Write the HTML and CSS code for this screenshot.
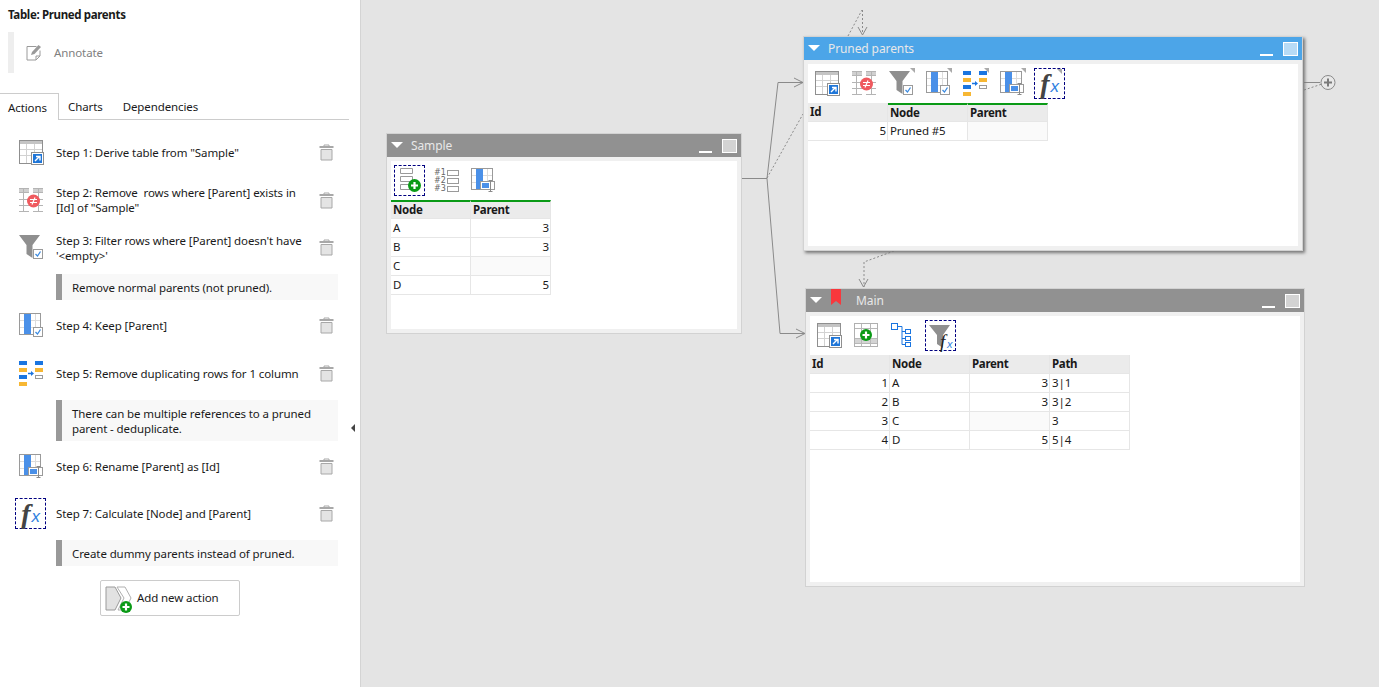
FILE: index.html
```html
<!DOCTYPE html>
<html lang="en">
<head>
    <meta charset="UTF-8">
    <title>Table: Pruned parents</title>
    <link rel="stylesheet" href="styles.css">
</head>
<body>

<svg class="defs" width="0" height="0">
    <symbol id="ic-derive" viewBox="0 0 25 25">
        <rect x="0.5" y="0.5" width="23" height="23" fill="#fff" stroke="#8f8f8f"/>
        <rect x="1" y="1" width="22" height="3" fill="#c4c4c4"/>
        <path d="M1 9.5h22M1 15.5h22M7.5 4v19M15.5 4v19" stroke="#d2d2d2"/>
        <rect x="12.5" y="12.5" width="12" height="12" fill="#fff" stroke="#8f8f8f"/>
        <rect x="14" y="14" width="9" height="9" fill="#1f76d8"/>
        <path d="M16 21l4-4M17 16.5h4v4" fill="none" stroke="#fff" stroke-width="1.4"/>
    </symbol>
    <symbol id="ic-remove" viewBox="0 0 25 25">
        <path d="M0 1h10v3.500H0zM14 1h10v3.500H14z" fill="#d0d0d0"/>
        <path d="M0 .5h10M14 .5h10M0 4.500h10M14 4.500h10M0 11.500h10M14 11.500h10M0 17.500h10M14 17.500h10M0 23.500h10M14 23.500h10M4.500 0v24M19.500 0v24" stroke="#b4b4b4" fill="none"/>
        <circle cx="14.500" cy="13" r="6.500" fill="#ef5a5f"/>
        <path d="M11 11.500h7M11 14.500h7M16 9.500l-3 7" stroke="#fff" stroke-width="1.200" fill="none"/>
    </symbol>
    <symbol id="ic-filter" viewBox="0 0 25 25">
        <path d="M0 0h21l-7.500 10v13l-6-4v-9z" fill="#8f8f8f"/>
        <rect x="14.500" y="14.500" width="9" height="9" fill="#fff" stroke="#9a9a9a"/>
        <path d="M16.500 19l2 2 3-4.500" fill="none" stroke="#3c8be0" stroke-width="1.300"/>
    </symbol>
    <symbol id="ic-keep" viewBox="0 0 25 25">
        <rect x="0.500" y="0.500" width="21" height="21" fill="#fff" stroke="#9a9a9a"/>
        <path d="M1 7.500h20M1 14.500h20M16.500 1v20" stroke="#dcdcdc"/>
        <rect x="5" y="1" width="7" height="20" fill="#4a90e8"/>
        <rect x="14.500" y="14.500" width="9" height="9" fill="#fff" stroke="#9a9a9a"/>
        <path d="M16.500 19l2 2 3-4.500" fill="none" stroke="#3c8be0" stroke-width="1.300"/>
    </symbol>
    <symbol id="ic-dedup" viewBox="0 0 25 25">
        <rect x="0" y="0" width="8" height="4" fill="#1a75e0"/>
        <rect x="0" y="7" width="8" height="4" fill="#f7b733"/>
        <rect x="0" y="14" width="8" height="4" fill="#1a75e0"/>
        <rect x="0" y="21" width="8" height="4" fill="#f7b733"/>
        <rect x="16" y="0" width="8" height="4" fill="#1a75e0"/>
        <rect x="16" y="7" width="8" height="4" fill="#f7b733"/>
        <rect x="16.500" y="14.500" width="7" height="3" fill="#fff" stroke="#9a9a9a"/>
        <path d="M9 12.500h4" stroke="#1a75e0" stroke-width="1.500"/>
        <path d="M12 10l3 2.500-3 2.500z" fill="#1a75e0"/>
    </symbol>
    <symbol id="ic-rename" viewBox="0 0 25 25">
        <rect x="0.500" y="0.500" width="21" height="21" fill="#fff" stroke="#9a9a9a"/>
        <path d="M1 7.500h20M1 14.500h20M16.500 1v20" stroke="#dcdcdc"/>
        <rect x="5" y="1" width="7" height="20" fill="#4a90e8"/>
        <rect x="9.500" y="13.500" width="14" height="8" fill="#fff" stroke="#9a9a9a"/>
        <rect x="11" y="15" width="7" height="5" fill="#4a90e8"/>
        <path d="M17.500 12.500h4M19.500 12.500v11M17.500 23.500h4" fill="none" stroke="#8a8a8a"/>
    </symbol>
    <symbol id="ic-addrow" viewBox="0 0 25 25">
        <path d="M3.500 .5h12v5h-12zM3.500 8.500h12v5h-12zM3.500 16.500h12v5h-12z" fill="#fff" stroke="#9a9a9a"/>
        <circle cx="17.500" cy="17.500" r="6.500" fill="#0a9a16"/>
        <path d="M14 17.500h7M17.500 14v7" stroke="#fff" stroke-width="2.200"/>
    </symbol>
    <symbol id="ic-tablePlus" viewBox="0 0 25 25">
        <rect x="0.500" y="0.500" width="23" height="23" fill="#fff" stroke="#b0b0b0"/>
        <rect x="1" y="16" width="22" height="4" fill="#d4d4d4"/>
        <path d="M1 5.500h22M1 15.500h22M1 20.500h22M7.500 1v22M16.500 1v22" stroke="#b8b8b8"/>
        <circle cx="12" cy="12" r="6" fill="#0a9a16"/>
        <path d="M8.500 12h7M12 8.500v7" stroke="#fff" stroke-width="2.200"/>
    </symbol>
    <symbol id="ic-tree" viewBox="0 0 25 25">
        <g fill="#fff" stroke="#1a75e0">
            <rect x="0.500" y="0.500" width="6" height="6"/>
            <rect x="14.500" y="6.500" width="5" height="4"/>
            <rect x="14.500" y="13.500" width="5" height="4"/>
            <rect x="14.500" y="19.500" width="5" height="4"/>
        </g>
        <path d="M6.500 3.500h4.500v18h3.500M11 8.500h3.500M11 15.500h3.500" fill="none" stroke="#1a75e0"/>
    </symbol>
    <symbol id="ic-trash" viewBox="0 0 15 17">
        <path d="M5 2.500v-1.500h5v1.500" fill="none" stroke="#a8a8a8"/>
        <rect x="0.500" y="2" width="14" height="2" fill="#a8a8a8"/>
        <path d="M2 5.500h11v10.500h-11z" fill="#e4e4e4" stroke="#a8a8a8"/>
    </symbol>
    <symbol id="ic-annotate" viewBox="0 0 16 17">
        <path d="M10.500 2.500h-9.500v13.500h9l4-4v-5.500" fill="none" stroke="#9a9a9a"/>
        <path d="M10 16v-4h4" fill="none" stroke="#9a9a9a"/>
        <path d="M5 11l1-3 6.500-7 2.500 2-6.500 7z" fill="#9a9a9a"/>
    </symbol>
    <symbol id="ic-addaction" viewBox="0 0 28 28">
        <path d="M1 1h9l6 11-6 12h-9z" fill="#e2e2e2" stroke="#9a9a9a"/>
        <path d="M12 1h8l6 11-6 12h-7l6-12z" fill="#fff" stroke="#b0b0b0"/>
        <circle cx="21" cy="21" r="6" fill="#0a9a16"/>
        <path d="M17.500 21h7M21 17.500v7" stroke="#fff" stroke-width="2.200"/>
    </symbol>
</svg>

<div class="app">
    <aside class="sidebar">
        <div class="sheet-title">Table: Pruned parents</div>
        <div class="annotate">
            <svg class="annotate-icon"><use href="#ic-annotate"/></svg>
            <span>Annotate</span>
        </div>

        <div class="tabs">
            <div class="tab active">Actions</div>
            <div class="tab">Charts</div>
            <div class="tab">Dependencies</div>
        </div>

        <div class="steps">
            <div class="step">
                <svg class="step-icon"><use href="#ic-derive"/></svg>
                <div class="step-text">Step 1: Derive table from "Sample"</div>
                <svg class="trash"><use href="#ic-trash"/></svg>
            </div>
            <div class="step">
                <svg class="step-icon"><use href="#ic-remove"/></svg>
                <div class="step-text">Step 2: Remove&nbsp; rows where [Parent] exists in [Id] of "Sample"</div>
                <svg class="trash"><use href="#ic-trash"/></svg>
            </div>
            <div class="step">
                <svg class="step-icon"><use href="#ic-filter"/></svg>
                <div class="step-text">Step 3: Filter rows where [Parent] doesn't have '&lt;empty&gt;'</div>
                <svg class="trash"><use href="#ic-trash"/></svg>
            </div>
            <div class="note">Remove normal parents (not pruned).</div>
            <div class="step">
                <svg class="step-icon"><use href="#ic-keep"/></svg>
                <div class="step-text">Step 4: Keep [Parent]</div>
                <svg class="trash"><use href="#ic-trash"/></svg>
            </div>
            <div class="step">
                <svg class="step-icon"><use href="#ic-dedup"/></svg>
                <div class="step-text">Step 5: Remove duplicating rows for 1 column</div>
                <svg class="trash"><use href="#ic-trash"/></svg>
            </div>
            <div class="note">There can be multiple references to a pruned parent - deduplicate.</div>
            <div class="step">
                <svg class="step-icon"><use href="#ic-rename"/></svg>
                <div class="step-text">Step 6: Rename [Parent] as [Id]</div>
                <svg class="trash"><use href="#ic-trash"/></svg>
            </div>
            <div class="step">
                <div class="fx-box step-fx"><span class="fx-f">f</span><span class="fx-x">x</span></div>
                <div class="step-text">Step 7: Calculate [Node] and [Parent]</div>
                <svg class="trash"><use href="#ic-trash"/></svg>
            </div>
            <div class="note">Create dummy parents instead of pruned.</div>
        </div>

        <div class="add-action">
            <svg class="add-action-icon"><use href="#ic-addaction"/></svg>
            <span class="add-action-label">Add new action</span>
        </div>
        <div class="collapse-handle"></div>
    </aside>

    <main class="canvas">
        <!-- connectors, in page coordinates -->
        <svg class="wires" viewBox="361 0 1018 687">
            <g fill="none" stroke="#8a8a8a">
                <path d="M741 178.500h26L778 82.500h25M767 178.500L780 333.500h25"/>
                <path d="M794 78l9 4.500-9 4.500M796 329l9 4.500-9 4.500"/>
                <path d="M1304 82.500h16"/>
            </g>
            <g fill="none" stroke="#8a8a8a" stroke-dasharray="2 2">
                <path d="M767 178L803 114"/>
                <path d="M862.500 10v24M848 36L862 10"/>
                <path d="M1304 90L1322 84"/>
                <path d="M894 251L864 262v25"/>
            </g>
            <path d="M858 27l4.500 8 4.500-8M859 279l4.500 8 4.500-8" fill="none" stroke="#8a8a8a"/>
            <circle cx="1328" cy="82.500" r="7" fill="#e8e8e8" stroke="#8a8a8a"/>
            <path d="M1324 82.500h8M1328 78.500v8" stroke="#7a7a7a" stroke-width="2"/>
        </svg>

        <section class="win win-sample">
            <div class="win-title">
                <span class="caret"></span>
                <span class="win-name">Sample</span>
                <span class="win-min"></span>
                <span class="win-max"></span>
            </div>
            <div class="win-body">
                <div class="toolbar">
                    <div class="tool dashed"><svg class="tool-icon"><use href="#ic-addrow"/></svg></div>
                    <div class="tool numbered">
                        <div class="num-row"><span>#1</span><i></i></div>
                        <div class="num-row"><span>#2</span><i></i></div>
                        <div class="num-row"><span>#3</span><i></i></div>
                    </div>
                    <div class="tool"><svg class="tool-icon"><use href="#ic-rename"/></svg></div>
                </div>
                <table class="grid">
                    <tr><th class="fresh">Node</th><th class="fresh">Parent</th></tr>
                    <tr><td>A</td><td class="num">3</td></tr>
                    <tr><td>B</td><td class="num">3</td></tr>
                    <tr><td>C</td><td class="empty"></td></tr>
                    <tr><td>D</td><td class="num">5</td></tr>
                </table>
            </div>
        </section>

        <section class="win win-pruned">
            <div class="win-title">
                <span class="caret"></span>
                <span class="win-name">Pruned parents</span>
                <span class="win-min"></span>
                <span class="win-max"></span>
            </div>
            <div class="win-body">
                <div class="toolbar">
                    <div class="tool"><svg class="tool-icon"><use href="#ic-derive"/></svg></div>
                    <div class="tool"><svg class="tool-icon"><use href="#ic-remove"/></svg></div>
                    <div class="tool marked"><svg class="tool-icon"><use href="#ic-filter"/></svg></div>
                    <div class="tool marked"><svg class="tool-icon"><use href="#ic-keep"/></svg></div>
                    <div class="tool marked"><svg class="tool-icon"><use href="#ic-dedup"/></svg></div>
                    <div class="tool marked"><svg class="tool-icon"><use href="#ic-rename"/></svg></div>
                    <div class="tool marked fx-box"><span class="fx-f">f</span><span class="fx-x">x</span></div>
                </div>
                <table class="grid">
                    <tr><th>Id</th><th class="fresh">Node</th><th class="fresh">Parent</th></tr>
                    <tr><td class="num">5</td><td>Pruned #5</td><td class="empty"></td></tr>
                </table>
            </div>
        </section>

        <section class="win win-main">
            <div class="win-title">
                <span class="caret"></span>
                <svg class="bookmark" viewBox="0 0 10 16"><path d="M0 0h10v16l-5-4-5 4z" fill="#f9373c"/></svg>
                <span class="win-name">Main</span>
                <span class="win-min"></span>
                <span class="win-max"></span>
            </div>
            <div class="win-body">
                <div class="toolbar">
                    <div class="tool"><svg class="tool-icon"><use href="#ic-derive"/></svg></div>
                    <div class="tool"><svg class="tool-icon"><use href="#ic-tablePlus"/></svg></div>
                    <div class="tool"><svg class="tool-icon"><use href="#ic-tree"/></svg></div>
                    <div class="tool dashed funnel-fx">
                        <svg class="funnel" viewBox="0 0 21 23"><path d="M0 0h21l-7 10v13l-6-4v-9z" fill="#8f8f8f"/></svg>
                        <span class="fx-f small">f</span><span class="fx-x small">x</span>
                    </div>
                </div>
                <table class="grid">
                    <tr><th>Id</th><th>Node</th><th>Parent</th><th>Path</th></tr>
                    <tr><td class="num">1</td><td>A</td><td class="num">3</td><td>3|1</td></tr>
                    <tr><td class="num">2</td><td>B</td><td class="num">3</td><td>3|2</td></tr>
                    <tr><td class="num">3</td><td>C</td><td class="empty"></td><td>3</td></tr>
                    <tr><td class="num">4</td><td>D</td><td class="num">5</td><td>5|4</td></tr>
                </table>
            </div>
        </section>
    </main>
</div>

</body>
</html>
```

FILE: styles.css
```css
body {
    font-family: "Noto Sans", Arial, sans-serif;
    font-size: 11.5px;
    letter-spacing: -0.1px;
    color: #1a1a1a;
    margin: 0;
    background-color: #fff;
    overflow: hidden;
}
.defs {
    position: absolute;
}
.app {
    display: flex;
    height: 687px;
}

/* left panel */
.sidebar {
    position: relative;
    width: 360px;
    flex-shrink: 0;
    border-right: 1px solid #d4d4d4;
    background: #fff;
}
.sheet-title {
    font-weight: 700;
    letter-spacing: -0.35px;
    line-height: 16px;
    padding: 7px 0 0 8px;
}
.annotate {
    display: flex;
    align-items: center;
    height: 41px;
    margin: 9px 0 0 8px;
    border-left: 6px solid #eee;
    color: #808080;
}
.annotate-icon {
    width: 16px;
    height: 17px;
    margin: 0 12px 0 12px;
}
.tabs {
    display: flex;
    height: 26px;
    margin: 20px 11px 0 0;
    border-bottom: 1px solid #ccc;
    line-height: 27px;
}
.tab {
    padding: 0 12px 0 8px;
}
.tab.active {
    height: 26px;
    width: 42px;
    padding-right: 8px;
    background: #fff;
    border-top: 1px solid #ccc;
    border-right: 1px solid #ccc;
    margin-right: 1px;
}
.steps {
    padding-top: 9px;
}
.step {
    display: flex;
    align-items: center;
    height: 47.5px;
}
.step-icon {
    width: 25px;
    height: 25px;
    margin-left: 19px;
    flex-shrink: 0;
}
.step-text {
    width: 252px;
    margin-left: 12px;
    line-height: 15px;
}
.trash {
    width: 15px;
    height: 17px;
    margin-left: 11px;
    flex-shrink: 0;
}
.note {
    margin: 2.5px 22px 2px 56px;
    padding: 6px 8px 5px 10px;
    background: #f8f8f8;
    border-left: 6px solid #999;
    line-height: 15px;
}
.add-action {
    display: flex;
    align-items: center;
    box-sizing: border-box;
    width: 140px;
    height: 36px;
    margin: 14px 0 0 100px;
    border: 1px solid #ccc;
    border-radius: 2px;
}
.add-action-icon {
    width: 28px;
    height: 28px;
    margin: 4px 4px 0 4px;
}
.add-action-label {
    margin-bottom: 2px;
}
.collapse-handle {
    position: absolute;
    left: 351px;
    top: 424px;
    border-style: solid;
    border-width: 4px 4px 4px 0;
    border-color: transparent #444 transparent transparent;
}

/* fx button */
.fx-box {
    display: flex;
    align-items: center;
    justify-content: center;
    box-sizing: border-box;
    width: 31px;
    height: 31px;
    border: 1px dashed #000080;
}
.step-fx {
    margin-left: 15px;
    margin-right: -2px;
    flex-shrink: 0;
}
.fx-f {
    font-family: "Liberation Serif", serif;
    font-style: italic;
    font-weight: 700;
    font-size: 28px;
    color: #444;
    line-height: 1;
}
.fx-x {
    font-family: "Liberation Sans", sans-serif;
    font-style: italic;
    font-size: 17px;
    color: #2f80e0;
    margin: 6px 0 0 1px;
}

/* canvas */
.canvas {
    position: relative;
    flex: 1;
    background-color: #e4e4e4;
}
.wires {
    position: absolute;
    left: 0;
    top: 0;
    width: 1018px;
    height: 687px;
}
.win {
    position: absolute;
    box-sizing: border-box;
    background: #f0f0f0;
    border: 1px solid #d2d2d2;
}
.win-sample {
    left: 25px;
    top: 133px;
    width: 356px;
    height: 201px;
}
.win-pruned {
    left: 442px;
    top: 36px;
    width: 500px;
    height: 215px;
    box-shadow: 2px 2px 3px #777;
}
.win-main {
    left: 444px;
    top: 288px;
    width: 500px;
    height: 299px;
}
.win-title {
    position: relative;
    display: flex;
    align-items: center;
    height: 23px;
    background-color: #919191;
    color: #e8e8e8;
    font-size: 12px;
}
.win-pruned .win-title {
    background-color: #4ca5e8;
}
.caret {
    width: 0;
    height: 0;
    margin: 0 0 2px 4px;
    border-style: solid;
    border-width: 6px 6px 0 6px;
    border-color: #fff transparent transparent transparent;
}
.win-name {
    margin-left: 8px;
}
.win-main .win-name {
    margin-left: 15px;
}
.bookmark {
    width: 10px;
    height: 16px;
    margin: -7px 0 0 9px;
}
.win-min {
    position: absolute;
    right: 29px;
    bottom: 4px;
    width: 13px;
    height: 2px;
    background: #fff;
}
.win-max {
    position: absolute;
    right: 4px;
    top: 5px;
    box-sizing: border-box;
    width: 15px;
    height: 14px;
    background: rgba(255, 255, 255, 0.6);
    border: 1px solid #fff;
}
.win-body {
    box-sizing: border-box;
    height: calc(100% - 31px);
    margin: 4px 4px 0;
    background: #fff;
    overflow: hidden;
}
.toolbar {
    display: flex;
    gap: 6px;
    padding: 4px 0 4px 4px;
}
.win-sample .toolbar {
    padding-left: 3px;
}
.tool {
    position: relative;
    display: flex;
    align-items: center;
    justify-content: center;
    box-sizing: border-box;
    width: 31px;
    height: 31px;
}
.tool.dashed {
    border: 1px dashed #000080;
}
.tool-icon {
    width: 25px;
    height: 25px;
}
.tool.marked::after {
    content: "";
    position: absolute;
    right: 2px;
    top: 0;
    border-style: solid;
    border-width: 0 5px 5px 0;
    border-color: transparent #aaa transparent transparent;
}
.numbered {
    flex-direction: column;
    gap: 2px;
    font-family: "DejaVu Sans", sans-serif;
    font-size: 8px;
    letter-spacing: 0;
    color: #666;
}
.num-row {
    display: flex;
    align-items: center;
    gap: 1px;
    height: 6px;
}
.num-row i {
    box-sizing: border-box;
    width: 12px;
    height: 6px;
    border: 1px solid #9a9a9a;
}
.funnel-fx {
    justify-content: flex-start;
}
.funnel {
    position: absolute;
    left: 3px;
    top: 4px;
    width: 21px;
    height: 23px;
}
.fx-f.small {
    position: absolute;
    left: 14px;
    top: 11px;
    font-size: 19px;
    font-weight: 400;
    color: #222;
}
.fx-x.small {
    position: absolute;
    left: 20px;
    top: 11px;
    font-size: 11px;
}

/* data tables */
.grid {
    border-collapse: separate;
    border-spacing: 0;
    table-layout: fixed;
    font-size: 11.5px;
}
.grid th, .grid td {
    box-sizing: border-box;
    width: 80px;
    height: 19px;
    padding: 0 1px 0 2px;
    border-right: 1px solid #e6e6e6;
    border-bottom: 1px solid #e6e6e6;
    text-align: left;
    line-height: 16px;
    overflow: hidden;
    white-space: nowrap;
}
.grid th {
    background-color: #ebebeb;
    font-weight: 700;
    letter-spacing: -0.3px;
}
.grid th.fresh {
    border-top: 2px solid #0a9a16;
}
.grid td.num {
    text-align: right;
}
.grid td.empty {
    background-color: #fafafa;
}
```
